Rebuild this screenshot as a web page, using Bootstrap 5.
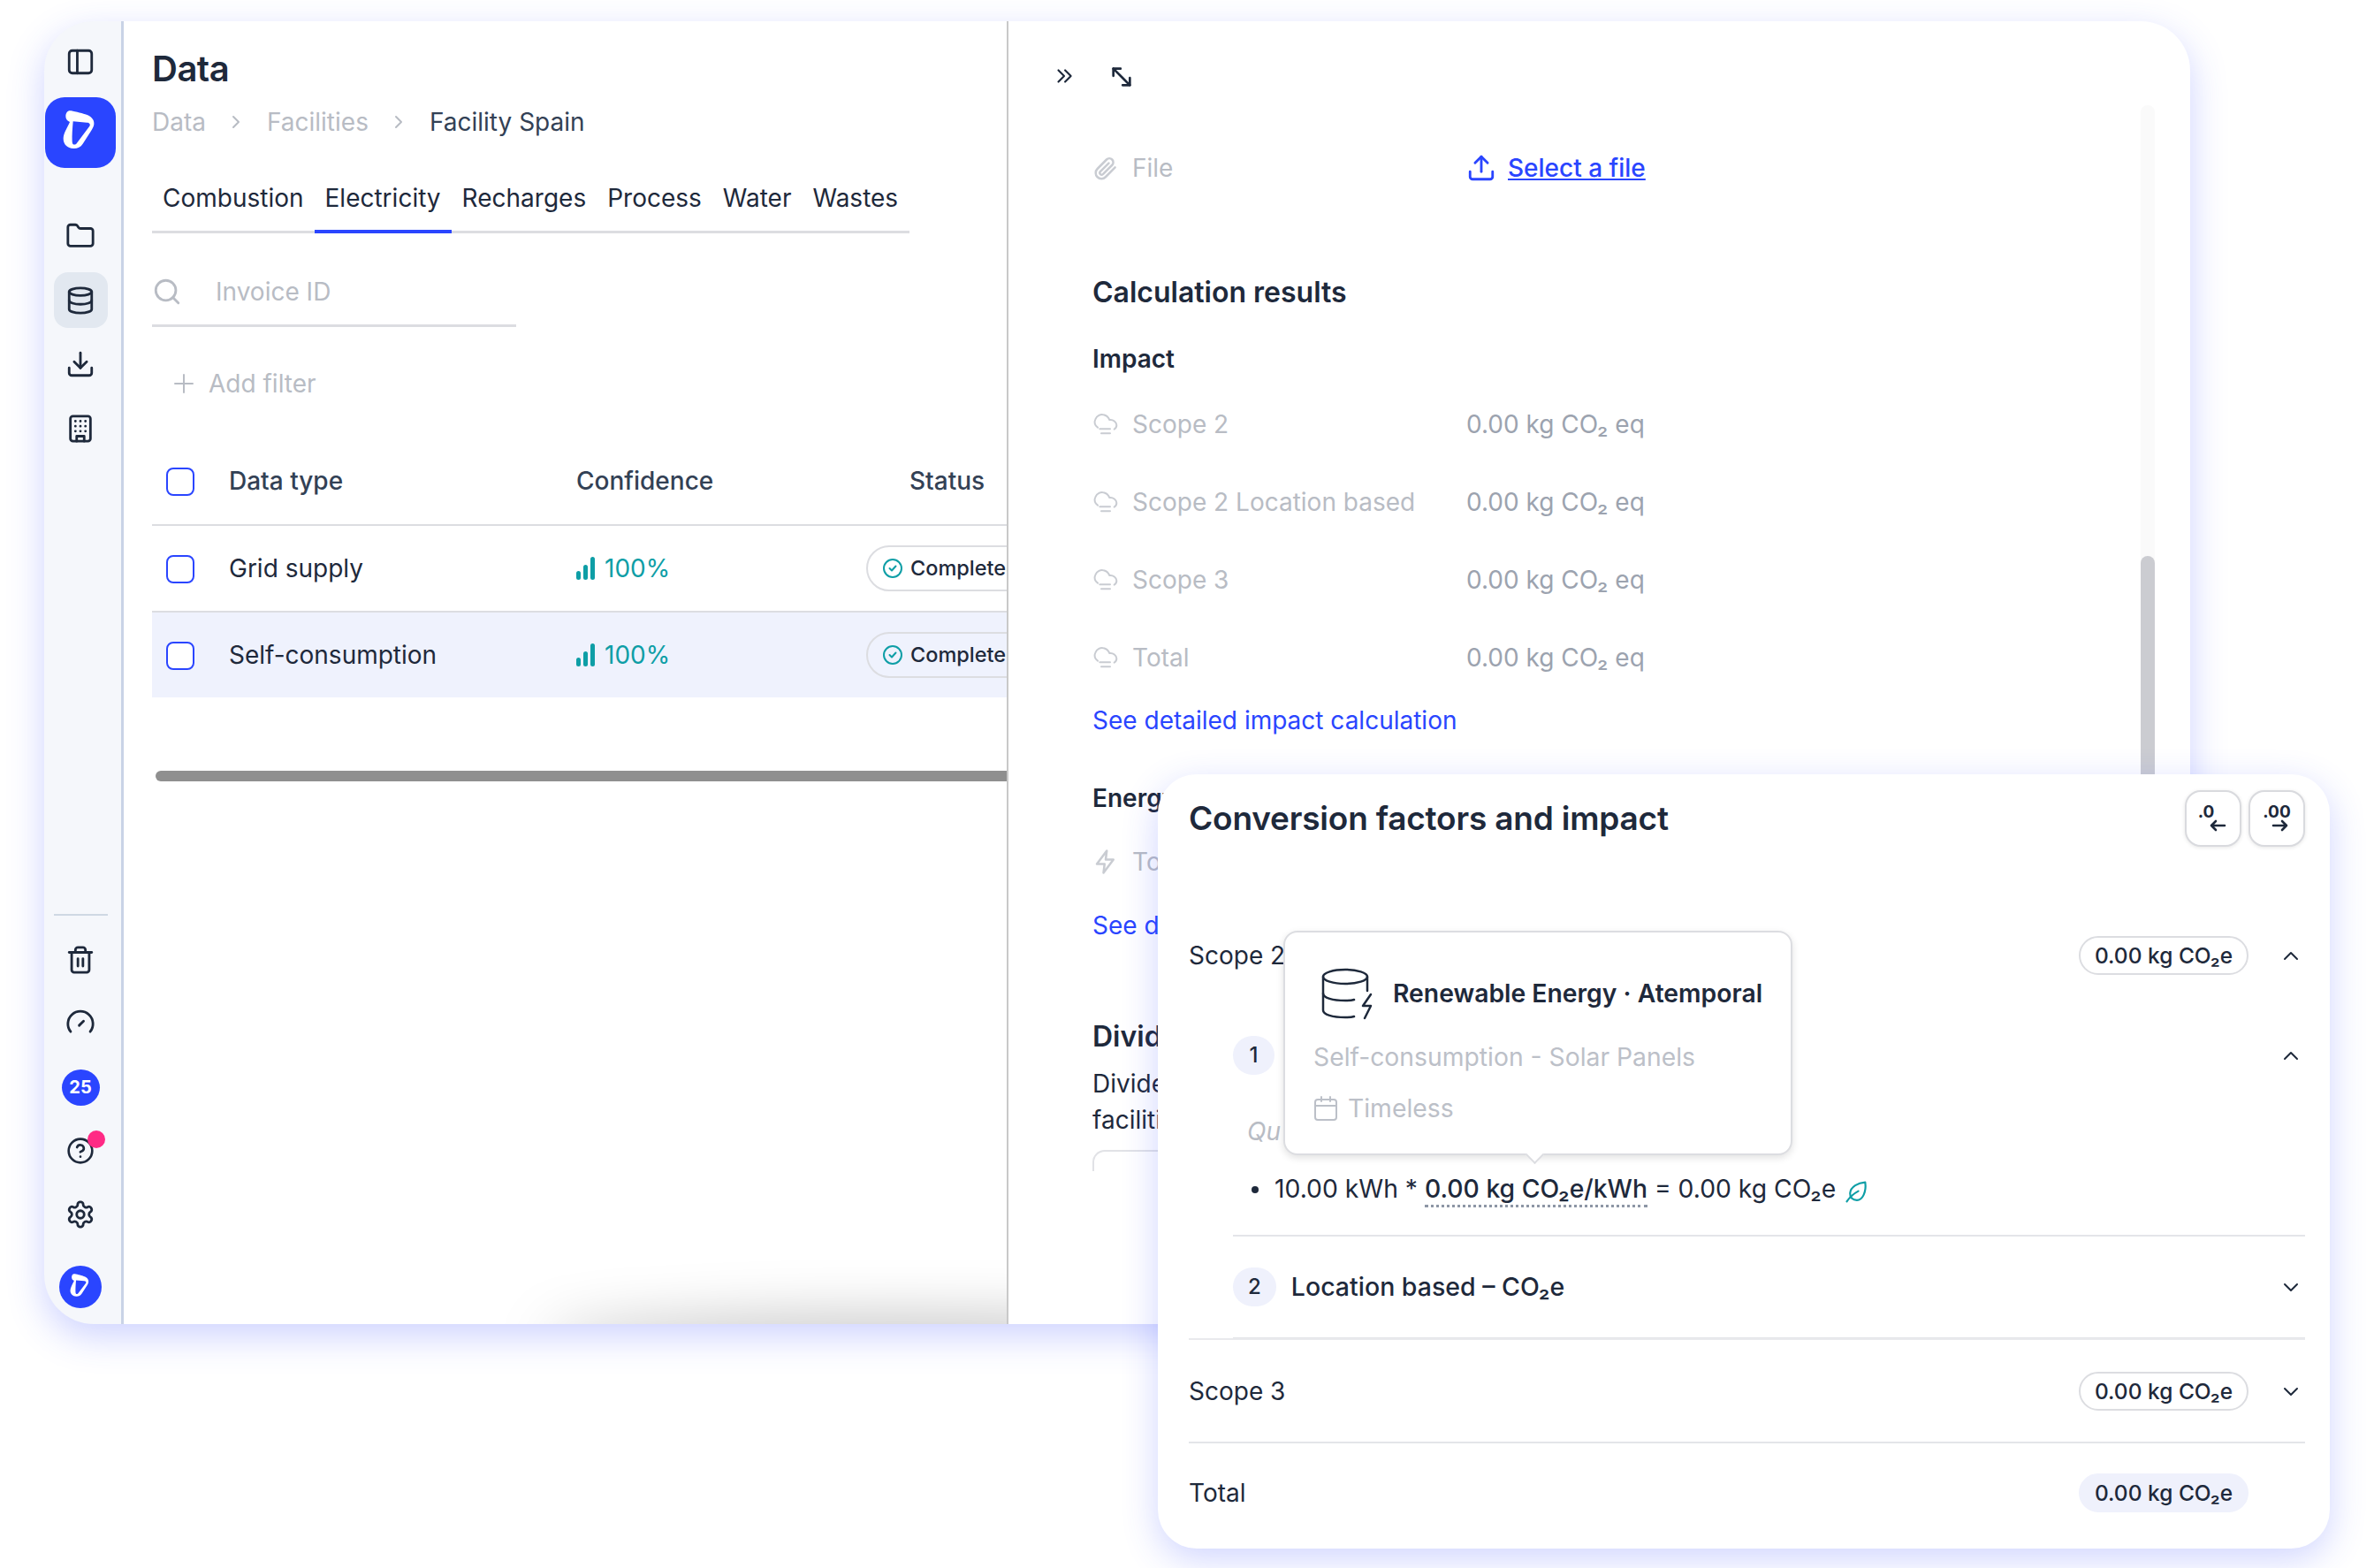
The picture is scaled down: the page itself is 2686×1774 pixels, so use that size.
<!DOCTYPE html>
<html lang="en">
<head>
  <meta charset="UTF-8">
  <meta name="viewport" content="width=device-width, initial-scale=1">
  <title>Data - Facility Spain</title>
  <link href="https://cdn.jsdelivr.net/npm/bootstrap@5.3.2/dist/css/bootstrap.min.css" rel="stylesheet">
  <style>
    html, body { margin: 0; width: 2686px; height: 1774px; overflow: hidden; background: #fff; }
    body { position: relative; font-family: Inter, "Noto Sans", sans-serif; font-size: 28px; line-height: 40px; color: #1e293b; }
    svg.ico { fill: none; stroke: currentColor; stroke-width: 2; stroke-linecap: round; stroke-linejoin: round; flex: none; }
    svg.ico.cloud-ico { stroke-width: 6; }
    svg.ico.leaf { stroke-width: 7; }
    svg.ico.db-ico { stroke-width: 2.5; }
    svg.ico.expand-ico { stroke-width: 2.3; }

    /* app window */
    .app-window { width: 2428px; height: 1474px; margin: 24px 0 0 50px; background: #fff; border-radius: 56px; overflow: hidden; }
    .window-glow { position: absolute; left: 50px; top: 24px; width: 2428px; height: 1474px; border-radius: 56px; box-shadow: 0 14px 40px rgba(60, 80, 255, .25); }

    /* sidebar */
    .rail { width: 90px; background: #f5f7fb; border-right: 3px solid #c9d3e6; padding: 28px 5px 18px 0; flex: none; }
    .rail-slot { width: 61px; height: 72.5px; display: flex; align-items: center; justify-content: center; }
    .rail-slot.low { height: 72px; }
    .rail-slot.active { height: 63px; margin: 4.75px 0; background: #e2e8f0; border-radius: 16px; }
    .rail-top { height: 36px; display: flex; align-items: center; }
    .logo-tile { width: 80px; height: 80px; margin-top: 22px; margin-bottom: 41px; background: #2a45ff; border-radius: 22px; display: flex; align-items: center; justify-content: center; }
    .rail-rule { width: 61px; height: 2px; background: #cfd8e3; margin-bottom: 14px; }
    .count-dot { width: 43px; height: 41px; border-radius: 50%; background: #2a45ff; color: #fff; font-size: 20px; font-weight: 700; line-height: 41px; text-align: center; }
    .help-wrap { position: relative; display: flex; }
    .pink-dot { position: absolute; right: -12px; top: -7px; width: 20px; height: 20px; border-radius: 50%; background: #ff2a85; }
    .avatar-dot { width: 48px; height: 48px; margin-top: 22px; border-radius: 50%; background: #2a45ff; display: flex; align-items: center; justify-content: center; }

    /* left pane */
    .list-pane { width: 1001px; flex: none; position: relative; overflow: hidden; border-right: 2px solid #c9c9c9; padding: 32px 0 0 32px; }
    .page-title { font-size: 40px; line-height: 44px; font-weight: 600; letter-spacing: -.5px; margin: 0; }
    .crumbs { margin: 18px 0 0; --bs-breadcrumb-margin-bottom: 0; align-items: center; color: #b8bcc4; }
    .crumbs li { display: flex; align-items: center; }
    .crumbs .crumb-sep { color: #b8bcc4; margin: 0 25.5px; }
    .crumbs .current { color: #334155; }
    .data-tabs { width: 857px; margin-top: 34px; border-bottom: 3px solid #dcdde1; }
    .data-tabs .nav-link { padding: 12px 12px 17px; margin-bottom: -3px; color: #1e293b; font-size: 28px; line-height: 40px; border-bottom: 3px solid transparent; border-radius: 0; }
    .data-tabs .nav-link.active { border-bottom: 4px solid #2a45ff; padding-bottom: 16px; }
    .search-line { width: 412px; height: 78px; margin-top: 28px; gap: 38px; border-bottom: 3px solid #dcdde1; color: #b8bcc4; }
    .add-filter { margin: 44px 0 0 24px; gap: 16px; color: #b8bcc4; }

    .data-table { width: 1108px; margin: 48px 0 0; table-layout: fixed; --bs-table-bg: transparent; --bs-table-color: #1e293b; }
    .col-pick { width: 87px; }
    .col-type { width: 393px; }
    .col-conf { width: 328px; }
    .col-state { width: 300px; }
    .data-table th, .data-table td { padding: 0; vertical-align: middle; border-bottom: 2px solid #dcdde1; }
    .data-table th { height: 92px; font-weight: 500; color: #334155; padding-bottom: 7px; }
    .data-table td { height: 98px; font-weight: 400; }
    .data-table tr:last-child td { border-bottom: 0; height: 97px; }
    .data-table tr.picked td { background: #eff2fd; }
    .pick-col { padding-left: 16px !important; }
    .form-check-input.pick { width: 32px; height: 32px; margin: 2px 0 0; border: 2px solid #2a45ff; border-radius: 8px; background-color: #fff; display: block; }
    .conf-value { color: #0e9ea6; gap: 11px; }
    .status-pill { height: 52px; width: 260px; border: 2px solid #dcdde1; border-radius: 26px; background: #fff; padding-left: 16px; gap: 8px; font-size: 23.5px; font-weight: 500; }
    .data-table tr.picked .status-pill { background: transparent; }
    .status-ok { color: #0e9ea6; }
    .status-head { padding-left: 49px !important; }
    .fake-scroll { width: 1100px; height: 12px; margin: 83px 0 0 4px; border-radius: 6px; background: #8f8f8f; }
    .pane-shade { position: absolute; left: 480px; width: 800px; bottom: -40px; height: 40px; border-radius: 50%; box-shadow: 0 0 64px 6px rgba(0, 0, 0, .26); }

    /* right pane */
    .detail-pane { flex: 1; min-width: 0; }
    .detail-tools { height: 95px; padding: 49px 0 0 50px; gap: 38px; }
    .detail-body { height: 1379px; }
    .detail-scroll { flex: 1; min-width: 0; padding: 51px 0 0 95px; overflow: hidden; }
    .track { width: 16px; margin-right: 40px; background: #fafafa; border-radius: 8px 8px 0 0; flex: none; display: flex; flex-direction: column; }
    .track-thumb { margin-top: 510px; flex: 1; background: #cbccd1; border-radius: 8px 8px 0 0; }
    .muted-label { width: 423px; gap: 15px; color: #b8bcc4; flex: none; }
    .muted-label svg.ico { color: #c9ccd2; }
    .muted-value { color: #9ca3af; }
    .file-link { color: #2a45ff; gap: 13px; font-weight: 500; }
    .file-link a { color: #2a45ff; }
    .section-head { font-size: 32px; font-weight: 600; line-height: 44px; margin: 99px 0 0; }
    .sub-head { font-size: 28px; font-weight: 600; line-height: 40px; margin: 33px 0 0; }
    .value-list { margin-top: 10px; }
    .value-row { height: 88px; }
    .blue-link { color: #2a45ff; text-decoration: none; display: block; margin-top: 7px; }
    .energy-head { margin-top: 48px; }
    .energy-row { margin-top: 8px; }
    .energy-link { margin-top: 8px; }
    .divider-head { margin-top: 84px; }
    .divider-text { margin-top: 11px; line-height: 41px; }
    .cut-box { height: 24px; width: 400px; margin-top: 13px; border: 2px solid #e1e2e6; border-bottom: 0; border-radius: 14px 14px 0 0; }

    /* floating card */
    .factor-card { position: absolute; left: 1310px; top: 876px; width: 1326px; height: 876px; padding: 18px 28px 0 35px; background: #fff; border-radius: 44px; box-shadow: 0 12px 40px rgba(60, 80, 255, .24); }
    .card-title { font-size: 37px; line-height: 50px; font-weight: 600; margin: 0; letter-spacing: -.2px; }
    .dec-btn { width: 64px; height: 64px; padding: 0; border: 2px solid #d9dade; border-radius: 18px; background: #fff; box-shadow: 0 1px 4px rgba(0, 0, 0, .1); display: flex; flex-direction: column; align-items: center; justify-content: center; color: #1e293b; }
    .dec-btn span { font-size: 19px; line-height: 16px; font-weight: 700; }
    .dec-btn svg.ico { stroke-width: 2.6; }
    .dec-less span { transform: translateX(-8px); }
    .dec-less svg { transform: translateX(5px); }
    .dec-more svg { transform: translateX(4px); }
    .scope-row { height: 60px; }
    .scope-first { margin-top: 93px; }
    .scope-third { margin-top: 28px; }
    .scope-total { margin-top: 26px; }
    .co2-pill { width: 192px; height: 44px; border: 2px solid #dcdde1; border-radius: 22px; font-size: 24.5px; line-height: 40px; text-align: center; font-weight: 500; margin-right: 36px; }
    .co2-pill.filled { background: #eff1fc; border-color: #eff1fc; }
    .chev-slot { width: 24px; margin-right: 4px; flex: none; display: flex; }
    .factor-sub { margin-left: 50px; }
    .num-chip { height: 44px; min-width: 47px; padding: 0 17px; border-radius: 22px; background: #eff1fc; font-size: 24px; line-height: 44px; font-weight: 500; text-align: center; }
    .sub-row { height: 44px; }
    .sub-one { margin-top: 61px; }
    .sub-two { margin-top: 35px; }
    .sub-name { margin-left: 17px; font-size: 28.5px; font-weight: 500; }
    .italic-cut { margin: 44px 0 0 16px; color: #b8bcc4; font-style: italic; }
    .formula { margin: 25px 0 0; padding: 0 0 32px 47px; list-style: none; position: relative; border-bottom: 2px solid #e4e5e9; font-size: 28.3px; }
    .formula::before { content: ""; position: absolute; left: 21px; top: 17px; width: 8px; height: 8px; border-radius: 50%; background: #1e293b; }
    .dotted-bit { font-weight: 500; border-bottom: 3px dotted #8d96a5; padding-bottom: 1px; }
    .leaf { color: #0e9ea6; vertical-align: -6px; margin-left: 2px; }
    .sub-end { height: 38px; border-bottom: 3px solid #e4e5e9; }
    .thin-rule { border-top: 2px solid #e9eaed; margin-top: -2px; }
    .scope-rule { border-top: 2px solid #e4e5e9; margin-top: 27px; }

    /* tooltip */
    .hover-note { position: absolute; left: 142px; top: 177px; width: 576px; height: 254px; padding: 39px 20px 0 32px; background: #fff; border: 2px solid #dcdde1; border-radius: 16px; box-shadow: 0 3px 8px rgba(0, 0, 0, .12); z-index: 2; font-size: 28.3px; }
    .hover-note::after { content: ""; position: absolute; left: 275px; bottom: -9px; width: 15px; height: 15px; background: #fff; border-right: 2px solid #dcdde1; border-bottom: 2px solid #dcdde1; transform: rotate(45deg); }
    .note-title { font-weight: 600; gap: 23px; margin-left: 9px; }
    .note-grey { color: #bcc0c8; margin-top: 22px; }
    .note-date { gap: 11px; margin-top: 18px; }
  </style>
</head>
<body>

<div class="window-glow"></div>

<svg width="0" height="0" class="position-absolute">
  <symbol id="logo-mark" viewBox="0 0 192 192"><path fill="#fff" fill-rule="evenodd" d="M60 22C70 22 100 30 112 34 132 40 144 52 142 68 141 76 136 84 130 94L104 134C96 146 84 151 72 150 52 149 38 136 38 116 38 100 50 82 60 60 50 56 46 50 46 40 46 30 52 22 60 22ZM71 58C69 80 67 105 68 125 68 136 74 140 82 134L127 74C131 67 126 62 118 62Z"/></symbol>
  <symbol id="cloud-line" viewBox="20 18 90 78"><path d="M38 68C28 62 25 50 30 40 35 28 48 22 58 25 68 27 75 35 78 42 90 40 102 50 102 60 102 66 98 72 94 74"/><path d="M45 73H80M50 88H80"/></symbol>
</svg>

<div class="app-window d-flex">
  <!-- sidebar -->
  <nav class="rail d-flex flex-column align-items-center">
    <div class="rail-top">
      <svg class="ico" width="34" height="34" viewBox="0 0 24 24"><rect x="3" y="3" width="18" height="18" rx="2.5"/><path d="M9.5 3v18"/></svg>
    </div>
    <div class="logo-tile">
      <svg width="64" height="64"><use href="#logo-mark"/></svg>
    </div>
    <div class="rail-slot">
      <svg class="ico" width="34" height="34" viewBox="0 0 24 24"><path d="M20 20a2 2 0 0 0 2-2V8a2 2 0 0 0-2-2h-7.9a2 2 0 0 1-1.69-.9L9.6 3.9A2 2 0 0 0 7.93 3H4a2 2 0 0 0-2 2v13a2 2 0 0 0 2 2Z"/></svg>
    </div>
    <div class="rail-slot active">
      <svg class="ico" width="34" height="34" viewBox="0 0 24 24"><ellipse cx="12" cy="5" rx="9" ry="3"/><path d="M3 5v14a9 3 0 0 0 18 0V5"/><path d="M3 12a9 3 0 0 0 18 0"/></svg>
    </div>
    <div class="rail-slot">
      <svg class="ico" width="34" height="34" viewBox="0 0 24 24"><path d="M21 15v4a2 2 0 0 1-2 2H5a2 2 0 0 1-2-2v-4"/><path d="m7 10 5 5 5-5"/><path d="M12 15V3"/></svg>
    </div>
    <div class="rail-slot">
      <svg class="ico" width="34" height="34" viewBox="0 0 24 24"><rect x="4" y="2" width="16" height="20" rx="2"/><path d="M9 22v-4h6v4"/><path d="M8 6h.01M12 6h.01M16 6h.01M8 10h.01M12 10h.01M16 10h.01M8 14h.01M12 14h.01M16 14h.01"/></svg>
    </div>

    <div class="mt-auto rail-rule"></div>
    <div class="rail-slot low">
      <svg class="ico" width="34" height="34" viewBox="0 0 24 24"><path d="M3 6h18"/><path d="M19 6v14a2 2 0 0 1-2 2H7a2 2 0 0 1-2-2V6"/><path d="M8 6V4a2 2 0 0 1 2-2h4a2 2 0 0 1 2 2v2"/><path d="M10 11v6M14 11v6"/></svg>
    </div>
    <div class="rail-slot low">
      <svg class="ico" width="34" height="34" viewBox="0 0 24 24"><path d="M4.2 18.5a10 10 0 1 1 15.6 0"/><path d="m11 13.5 3.5-3.5"/></svg>
    </div>
    <div class="rail-slot low"><div class="count-dot">25</div></div>
    <div class="rail-slot low">
      <div class="help-wrap">
        <svg class="ico" width="32" height="32" viewBox="0 0 24 24"><circle cx="12" cy="12" r="10"/><path d="M9.1 9a3 3 0 0 1 5.8 1c0 2-3 3-3 3"/><path d="M12 17h.01"/></svg>
        <span class="pink-dot"></span>
      </div>
    </div>
    <div class="rail-slot low">
      <svg class="ico" width="34" height="34" viewBox="0 0 24 24"><path d="M12.22 2h-.44a2 2 0 0 0-2 2v.18a2 2 0 0 1-1 1.73l-.43.25a2 2 0 0 1-2 0l-.15-.08a2 2 0 0 0-2.73.73l-.22.38a2 2 0 0 0 .73 2.73l.15.1a2 2 0 0 1 1 1.72v.51a2 2 0 0 1-1 1.74l-.15.09a2 2 0 0 0-.73 2.73l.22.38a2 2 0 0 0 2.73.73l.15-.08a2 2 0 0 1 2 0l.43.25a2 2 0 0 1 1 1.73V20a2 2 0 0 0 2 2h.44a2 2 0 0 0 2-2v-.18a2 2 0 0 1 1-1.73l.43-.25a2 2 0 0 1 2 0l.15.08a2 2 0 0 0 2.73-.73l.22-.39a2 2 0 0 0-.73-2.73l-.15-.08a2 2 0 0 1-1-1.74v-.5a2 2 0 0 1 1-1.74l.15-.09a2 2 0 0 0 .73-2.73l-.22-.38a2 2 0 0 0-2.73-.73l-.15.08a2 2 0 0 1-2 0l-.43-.25a2 2 0 0 1-1-1.73V4a2 2 0 0 0-2-2z"/><circle cx="12" cy="12" r="3"/></svg>
    </div>
    <div class="avatar-dot">
      <svg width="38" height="38"><use href="#logo-mark"/></svg>
    </div>
  </nav>

  <!-- data list -->
  <section class="list-pane">
    <h1 class="page-title">Data</h1>
    <ol class="breadcrumb crumbs">
      <li>Data</li>
      <li class="crumb-sep"><svg class="ico" width="18" height="22" viewBox="0 0 18 22"><path d="m6 5 6 6-6 6"/></svg></li>
      <li>Facilities</li>
      <li class="crumb-sep"><svg class="ico" width="18" height="22" viewBox="0 0 18 22"><path d="m6 5 6 6-6 6"/></svg></li>
      <li class="current">Facility Spain</li>
    </ol>

    <ul class="nav data-tabs">
      <li class="nav-item"><a class="nav-link" href="#">Combustion</a></li>
      <li class="nav-item"><a class="nav-link active" href="#">Electricity</a></li>
      <li class="nav-item"><a class="nav-link" href="#">Recharges</a></li>
      <li class="nav-item"><a class="nav-link" href="#">Process</a></li>
      <li class="nav-item"><a class="nav-link" href="#">Water</a></li>
      <li class="nav-item"><a class="nav-link" href="#">Wastes</a></li>
    </ul>

    <div class="search-line d-flex align-items-center">
      <svg class="ico" width="34" height="34" viewBox="0 0 24 24"><circle cx="11" cy="11" r="8"/><path d="m21 21-4.4-4.4"/></svg>
      <span>Invoice ID</span>
    </div>

    <div class="add-filter d-flex align-items-center">
      <svg class="ico" width="24" height="24" viewBox="0 0 24 24"><path d="M12 2v20M2 12h20"/></svg>
      <span>Add filter</span>
    </div>

    <table class="table data-table">
      <colgroup><col class="col-pick"><col class="col-type"><col class="col-conf"><col class="col-state"></colgroup>
      <thead>
        <tr>
          <th class="pick-col"><input class="form-check-input pick" type="checkbox" aria-label="Select all"></th>
          <th>Data type</th>
          <th>Confidence</th>
          <th class="status-head">Status</th>
        </tr>
      </thead>
      <tbody>
        <tr>
          <td class="pick-col"><input class="form-check-input pick" type="checkbox" aria-label="Select row"></td>
          <td>Grid supply</td>
          <td>
            <div class="conf-value d-flex align-items-center">
              <svg width="21" height="26" viewBox="0 0 21 26" fill="currentColor"><rect x="0" y="16" width="5" height="10" rx="2.5"/><rect x="8" y="9" width="5" height="17" rx="2.5"/><rect x="16" y="0" width="5" height="26" rx="2.5"/></svg>
              <span>100%</span>
            </div>
          </td>
          <td>
            <div class="status-pill d-flex align-items-center">
              <svg class="ico status-ok" width="24" height="24" viewBox="0 0 24 24"><circle cx="12" cy="12" r="10"/><path d="m8.5 12 2.5 2.5 4.5-5"/></svg>
              <span>Completed</span>
            </div>
          </td>
        </tr>
        <tr class="picked">
          <td class="pick-col"><input class="form-check-input pick" type="checkbox" aria-label="Select row"></td>
          <td>Self-consumption</td>
          <td>
            <div class="conf-value d-flex align-items-center">
              <svg width="21" height="26" viewBox="0 0 21 26" fill="currentColor"><rect x="0" y="16" width="5" height="10" rx="2.5"/><rect x="8" y="9" width="5" height="17" rx="2.5"/><rect x="16" y="0" width="5" height="26" rx="2.5"/></svg>
              <span>100%</span>
            </div>
          </td>
          <td>
            <div class="status-pill d-flex align-items-center">
              <svg class="ico status-ok" width="24" height="24" viewBox="0 0 24 24"><circle cx="12" cy="12" r="10"/><path d="m8.5 12 2.5 2.5 4.5-5"/></svg>
              <span>Completed</span>
            </div>
          </td>
        </tr>
      </tbody>
    </table>

    <div class="fake-scroll"></div>
    <div class="pane-shade"></div>
  </section>

  <!-- detail -->
  <section class="detail-pane">
    <div class="detail-tools d-flex align-items-start">
      <svg class="ico" width="26" height="26" viewBox="0 0 24 24"><path d="m6 18 6-6-6-6"/><path d="m13 18 6-6-6-6"/></svg>
      <svg class="ico expand-ico" width="28" height="28" viewBox="0 0 24 24"><path d="M4 4l16 16"/><path d="M4 11V4h7"/><path d="M20 13v7h-7"/></svg>
    </div>
    <div class="detail-body d-flex">
      <div class="detail-scroll">
        <div class="d-flex align-items-center">
          <div class="muted-label d-flex align-items-center">
            <svg class="ico" width="30" height="30" viewBox="0 0 24 24"><path d="m20.5 11.5-8.6 8.7a5.2 5.2 0 0 1-7.400-7.400l8.300-8.400a3.500 3.500 0 0 1 5 5l-8.300 8.300a1.700 1.700 0 0 1-2.400-2.400l7.700-7.600"/></svg>
            <span>File</span>
          </div>
          <div class="file-link d-flex align-items-center">
            <svg class="ico" width="34" height="34" viewBox="0 0 24 24"><path d="M3 15v4a2 2 0 0 0 2 2h14a2 2 0 0 0 2-2v-4"/><path d="m7 8 5-5 5 5"/><path d="M12 3v12"/></svg>
            <a href="#">Select a file</a>
          </div>
        </div>

        <h2 class="section-head">Calculation results</h2>
        <h3 class="sub-head">Impact</h3>

        <div class="value-list">
          <div class="value-row d-flex align-items-center">
            <div class="muted-label d-flex align-items-center">
              <svg class="ico cloud-ico" width="30" height="26"><use href="#cloud-line"/></svg>
              <span>Scope 2</span>
            </div>
            <span class="muted-value">0.00 kg CO₂ eq</span>
          </div>
          <div class="value-row d-flex align-items-center">
            <div class="muted-label d-flex align-items-center">
              <svg class="ico cloud-ico" width="30" height="26"><use href="#cloud-line"/></svg>
              <span>Scope 2 Location based</span>
            </div>
            <span class="muted-value">0.00 kg CO₂ eq</span>
          </div>
          <div class="value-row d-flex align-items-center">
            <div class="muted-label d-flex align-items-center">
              <svg class="ico cloud-ico" width="30" height="26"><use href="#cloud-line"/></svg>
              <span>Scope 3</span>
            </div>
            <span class="muted-value">0.00 kg CO₂ eq</span>
          </div>
          <div class="value-row d-flex align-items-center">
            <div class="muted-label d-flex align-items-center">
              <svg class="ico cloud-ico" width="30" height="26"><use href="#cloud-line"/></svg>
              <span>Total</span>
            </div>
            <span class="muted-value">0.00 kg CO₂ eq</span>
          </div>
        </div>
        <a class="blue-link" href="#">See detailed impact calculation</a>

        <h3 class="sub-head energy-head">Energy</h3>
        <div class="value-row energy-row d-flex align-items-center">
          <div class="muted-label d-flex align-items-center">
            <svg class="ico" width="30" height="30" viewBox="0 0 24 24"><path d="M13 2 4 14h7l-1 8 9-12h-7z"/></svg>
            <span>Total</span>
          </div>
        </div>
        <a class="blue-link energy-link" href="#">See detailed energy</a>

        <h2 class="section-head divider-head">Dividers</h2>
        <div class="divider-text">Divide<br>facilities</div>
        <div class="cut-box"></div>
      </div>
      <div class="track"><div class="track-thumb"></div></div>
    </div>
  </section>
</div>

<!-- conversion factors card -->
<div class="factor-card">
  <div class="d-flex justify-content-between align-items-center">
    <h2 class="card-title">Conversion factors and impact</h2>
    <div class="d-flex gap-2">
      <button class="dec-btn dec-less" type="button"><span>.0</span>
        <svg class="ico" width="20" height="14" viewBox="0 0 20 14"><path d="M18 7H3M8 2 3 7l5 5"/></svg></button>
      <button class="dec-btn dec-more" type="button"><span>.00</span>
        <svg class="ico" width="20" height="14" viewBox="0 0 20 14"><path d="M2 7h15M12 2l5 5-5 5"/></svg></button>
    </div>
  </div>

  <div class="scope-row scope-first d-flex align-items-center">
    <span>Scope 2</span>
    <span class="co2-pill ms-auto">0.00 kg CO₂e</span>
    <span class="chev-slot"><svg class="ico" width="24" height="24" viewBox="0 0 24 24"><path d="m5 16 7-7 7 7"/></svg></span>
  </div>

  <div class="factor-sub">
    <div class="sub-row sub-one d-flex align-items-center">
      <span class="num-chip">1</span>
      <span class="chev-slot ms-auto"><svg class="ico" width="24" height="24" viewBox="0 0 24 24"><path d="m5 16 7-7 7 7"/></svg></span>
    </div>
    <div class="italic-cut">Qu</div>
    <ul class="formula">
      <li>10.00 kWh * <span class="dotted-bit">0.00 kg CO₂e/kWh</span> = 0.00 kg CO₂e <svg class="ico leaf" width="28" height="28" viewBox="0 15 90 90"><path d="M75 30C50 32 22 45 20 70 19 85 30 95 45 95 65 95 80 65 75 30Z"/><path d="M8 100C20 82 35 70 50 62"/></svg></li>
    </ul>
    <div class="sub-row sub-two d-flex align-items-center">
      <span class="num-chip">2</span>
      <span class="sub-name">Location based – CO₂e</span>
      <span class="chev-slot ms-auto"><svg class="ico" width="24" height="24" viewBox="0 0 24 24"><path d="m5 9 7 7 7-7"/></svg></span>
    </div>
    <div class="sub-end"></div>
  </div>
  <div class="thin-rule"></div>

  <div class="scope-row scope-third d-flex align-items-center">
    <span>Scope 3</span>
    <span class="co2-pill ms-auto">0.00 kg CO₂e</span>
    <span class="chev-slot"><svg class="ico" width="24" height="24" viewBox="0 0 24 24"><path d="m5 9 7 7 7-7"/></svg></span>
  </div>
  <div class="scope-rule"></div>

  <div class="scope-row scope-total d-flex align-items-center">
    <span>Total</span>
    <span class="co2-pill filled ms-auto">0.00 kg CO₂e</span>
    <span class="chev-slot"></span>
  </div>

  <!-- tooltip over the first factor -->
  <div class="hover-note">
    <div class="note-title d-flex align-items-center">
      <svg class="ico db-ico" width="58" height="60" viewBox="0 0 58 60"><ellipse cx="27" cy="11" rx="25" ry="8"/><path d="M2 11v38c0 5 11 8 25 8 4 0 7 0 10-1"/><path d="M2 30c0 5 11 8 25 8 4 0 7 0 10-1"/><path d="M52 11v16"/><path d="M56 31 47 44h9l-7 14"/></svg>
      <span>Renewable Energy · Atemporal</span>
    </div>
    <div class="note-grey">Self-consumption - Solar Panels</div>
    <div class="note-grey note-date d-flex align-items-center">
      <svg class="ico" width="28" height="30" viewBox="0 0 28 30"><rect x="2" y="5" width="24" height="23" rx="3"/><path d="M2 12h24M9 2v5M19 2v5"/></svg>
      <span>Timeless</span>
    </div>
  </div>
</div>

<script src="https://cdn.jsdelivr.net/npm/bootstrap@5.3.2/dist/js/bootstrap.bundle.min.js"></script>
</body>
</html>
